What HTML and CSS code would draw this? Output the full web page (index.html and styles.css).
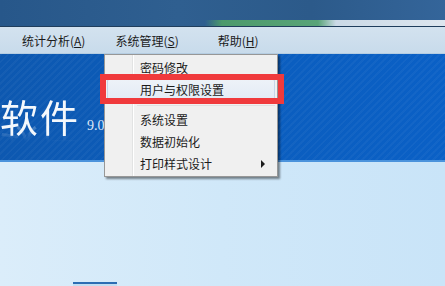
FILE: index.html
```html
<!DOCTYPE html>
<html lang="zh-CN">
<head>
  <meta charset="UTF-8">
  <title>系统管理</title>
  <link rel="stylesheet" href="styles.css">
</head>
<body>
  <div class="window">

    <div class="titlebar"></div>

    <div class="menubar">
      <span class="menu-item">统计分析(<u>A</u>)</span>
      <span class="menu-item">系统管理(<u>S</u>)</span>
      <span class="menu-item">帮助(<u>H</u>)</span>
    </div>

    <div class="banner">
      <span class="banner-title">软件</span>
      <span class="banner-version">9.01</span>
    </div>

    <div class="content">
      <div class="content-box"></div>
    </div>

    <!-- dropdown of 系统管理 -->
    <div class="dropdown">
      <div class="drop-item">密码修改</div>
      <div class="drop-item active">用户与权限设置</div>
      <div class="drop-sep"></div>
      <div class="drop-item">系统设置</div>
      <div class="drop-item">数据初始化</div>
      <div class="drop-item">打印样式设计<span class="arrow"></span></div>
    </div>

    <div class="mark"></div>
  </div>
</body>
</html>
```

FILE: styles.css
```css
body {
  margin: 0;
  background: #d4eaf9;
  font-family: "Noto Sans CJK SC", "Noto Sans", sans-serif;
  font-size: 12px;
  color: #1b1b1b;
}

.window {
  position: relative;
  width: 445px;
  height: 286px;
  overflow: hidden;
  display: flex;
  flex-direction: column;
}

.titlebar {
  height: 27px;
  flex-shrink: 0;
  border-bottom: 1px solid #1f3d5c;
  box-sizing: border-box;
  background:
    linear-gradient(90deg, rgba(60,110,160,0) 205px, #4c9a6b 222px, #59a478 318px, #cbd9e6 336px, #dde6ef 445px) bottom / 100% 6px no-repeat,
    linear-gradient(90deg, #27578a 0%, #2f5f90 40%, #2c5a8a 70%, #34659a 100%);
}

.menubar {
  height: 27px;
  flex-shrink: 0;
  display: flex;
  align-items: center;
  padding-left: 22px;
  background: linear-gradient(180deg, #d3e2ef 0%, #c8dbeb 100%);
  border-bottom: 1px solid #b5cde2;
  box-sizing: border-box;
}

.menu-item {
  margin-right: 30px;
  white-space: nowrap;
}

.menu-item:nth-child(2) {
  margin-right: 39px;
}

.banner {
  height: 108px;
  flex-shrink: 0;
  display: flex;
  align-items: flex-end;
  padding-bottom: 24px;
  box-sizing: border-box;
  border-bottom: 2px solid #4b93dc;
  background:
    repeating-linear-gradient(135deg, rgba(255,255,255,0.035) 0 2px, rgba(255,255,255,0) 2px 5px),
    linear-gradient(90deg, #0d58b0 0%, #0b5dbd 50%, #0a60c6 100%);
}

.banner-title {
  font-size: 38px;
  line-height: 40px;
  color: #f4f8fc;
  letter-spacing: 2px;
  -webkit-box-reflect: below -10px linear-gradient(transparent 60%, rgba(255,255,255,0.25));
}

.banner-version {
  font-family: "Liberation Serif", "DejaVu Serif", serif;
  font-size: 14px;
  color: #dce8f6;
  margin-left: 7px;
  margin-bottom: 2px;
}

.content {
  flex: 1;
  background: linear-gradient(90deg, #dbedfa 0%, #d0e8f9 50%, #c9e4f8 100%);
  padding-left: 73px;
  padding-top: 120px;
}

.content-box {
  width: 44px;
  height: 10px;
  border-top: 2px solid #2c6db3;
  background: #c4def2;
}

.dropdown {
  position: absolute;
  left: 104px;
  top: 54px;
  width: 174px;
  box-sizing: border-box;
  padding: 2px 2px 1px;
  background: #f0f0f0 linear-gradient(90deg, #f0f0f0 27px, #e2e3e3 27px, #e2e3e3 28px, #ffffff 28px, #ffffff 29px, #f0f0f0 29px);
  border: 1px solid #979797;
  box-shadow: 2px 2px 2px rgba(0, 0, 0, 0.45);
}

.drop-item {
  position: relative;
  height: 22px;
  line-height: 21px;
  padding-left: 33px;
  white-space: nowrap;
}

.drop-item.active {
  background: linear-gradient(180deg, #edf2f8, #e3ebf5);
  border: 1px solid #c6d6ea;
  border-radius: 2px;
  line-height: 20px;
  box-sizing: border-box;
  padding-left: 32px;
}

.drop-sep {
  height: 8px;
  margin-left: 30px;
  background: linear-gradient(#e0e0e0, #e0e0e0) center / 100% 1px no-repeat;
}

.arrow {
  position: absolute;
  right: 10px;
  top: 7px;
  border-left: 4px solid #1b1b1b;
  border-top: 4px solid transparent;
  border-bottom: 4px solid transparent;
}

.mark {
  position: absolute;
  left: 100px;
  top: 74px;
  width: 184px;
  height: 30px;
  box-sizing: border-box;
  border: 6px solid #f03a3c;
}
```
